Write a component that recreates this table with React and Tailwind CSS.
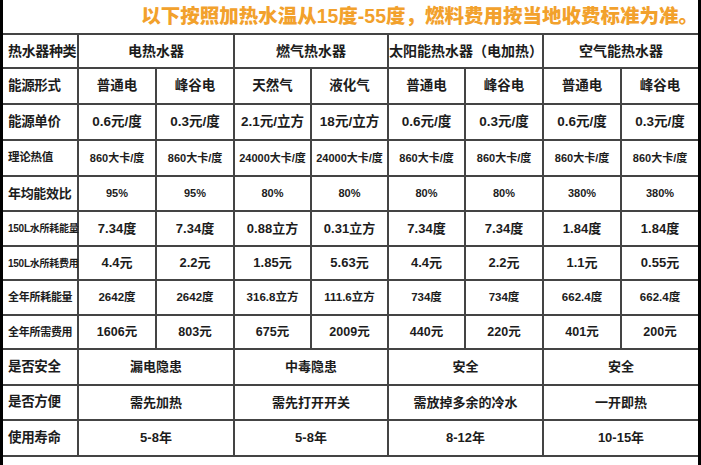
import React from "react";

const font = { fontFamily: '"Liberation Sans", "Noto Sans CJK SC", sans-serif' };

const widths = [75, 78, 78, 77, 77, 77, 78, 78, 77];

// [label, labelSize, cellSize, height, cells]
const rows = [
  ["热水器种类", "text-[14px]", "text-[14px]", "h-[34px]", [
    ["电热水器", 2], ["燃气热水器", 2], ["太阳能热水器（电加热）", 2], ["空气能热水器", 2],
  ]],
  ["能源形式", "text-[13.5px]", "text-[13.5px]", "h-[36px]",
    ["普通电", "峰谷电", "天然气", "液化气", "普通电", "峰谷电", "普通电", "峰谷电"]],
  ["能源单价", "text-[13.5px]", "text-[13.5px]", "h-[36px]",
    ["0.6元/度", "0.3元/度", "2.1元/立方", "18元/立方", "0.6元/度", "0.3元/度", "0.6元/度", "0.3元/度"]],
  ["理论热值", "text-[11.5px]", "text-[11px]", "h-[36px]",
    ["860大卡/度", "860大卡/度", "24000大卡/度", "24000大卡/度", "860大卡/度", "860大卡/度", "860大卡/度", "860大卡/度"]],
  ["年均能效比", "text-[13px]", "text-[11px]", "h-[35px]",
    ["95%", "95%", "80%", "80%", "80%", "80%", "380%", "380%"]],
  ["150L水所耗能量", "text-[10px]", "text-[13px]", "h-[35px]",
    ["7.34度", "7.34度", "0.88立方", "0.31立方", "7.34度", "7.34度", "1.84度", "1.84度"]],
  ["150L水所耗费用", "text-[10px]", "text-[13px]", "h-[34px]",
    ["4.4元", "2.2元", "1.85元", "5.63元", "4.4元", "2.2元", "1.1元", "0.55元"]],
  ["全年所耗能量", "text-[11px]", "text-[11.5px]", "h-[35px]",
    ["2642度", "2642度", "316.8立方", "111.6立方", "734度", "734度", "662.4度", "662.4度"]],
  ["全年所需费用", "text-[11px]", "text-[12.5px]", "h-[34px]",
    ["1606元", "803元", "675元", "2009元", "440元", "220元", "401元", "200元"]],
  ["是否安全", "text-[13.5px]", "text-[13px]", "h-[36px]", [
    ["漏电隐患", 2], ["中毒隐患", 2], ["安全", 2], ["安全", 2],
  ]],
  ["是否方便", "text-[13.5px]", "text-[13px]", "h-[35px]", [
    ["需先加热", 2], ["需先打开开关", 2], ["需放掉多余的冷水", 2], ["一开即热", 2],
  ]],
  ["使用寿命", "text-[13.5px]", "text-[13px]", "h-[36px]", [
    ["5-8年", 2], ["5-8年", 2], ["8-12年", 2], ["10-15年", 2],
  ]],
];

export default function App() {
  return (
    <div
      className="w-[701px] h-[465px] bg-white border-l-[3px] border-r-[3px] border-black overflow-hidden"
      style={font}
    >
      <div className="h-[33px] pt-[4px] flex justify-end">
        <p className="text-[19.5px] leading-[24px] font-black text-[#f2a12c] whitespace-nowrap">
          以下按照加热水温从15度-55度，燃料费用按当地收费标准为准。
        </p>
      </div>
      <table className="w-[695px] table-fixed border-collapse text-[#1c1c1c]">
        <colgroup>
          {widths.map((w, i) => (
            <col key={i} style={{ width: w }} />
          ))}
        </colgroup>
        <tbody>
          {rows.map(([label, ls, cs, h, cells], r) => (
            <tr key={r} className={h}>
              <td
                className={`border-2 border-l-0 border-[#444] pl-[5px] ${ls} font-semibold whitespace-nowrap tracking-tight`}
              >
                {label}
              </td>
              {cells.map((c, i) => {
                const text = Array.isArray(c) ? c[0] : c;
                const span = Array.isArray(c) ? c[1] : 1;
                const last = i === cells.length - 1;
                return (
                  <td
                    key={i}
                    colSpan={span}
                    className={`border-2 border-[#444] ${last ? "border-r-0" : ""} text-center ${cs} font-semibold whitespace-nowrap`}
                  >
                    {text}
                  </td>
                );
              })}
            </tr>
          ))}
        </tbody>
      </table>
    </div>
  );
}
